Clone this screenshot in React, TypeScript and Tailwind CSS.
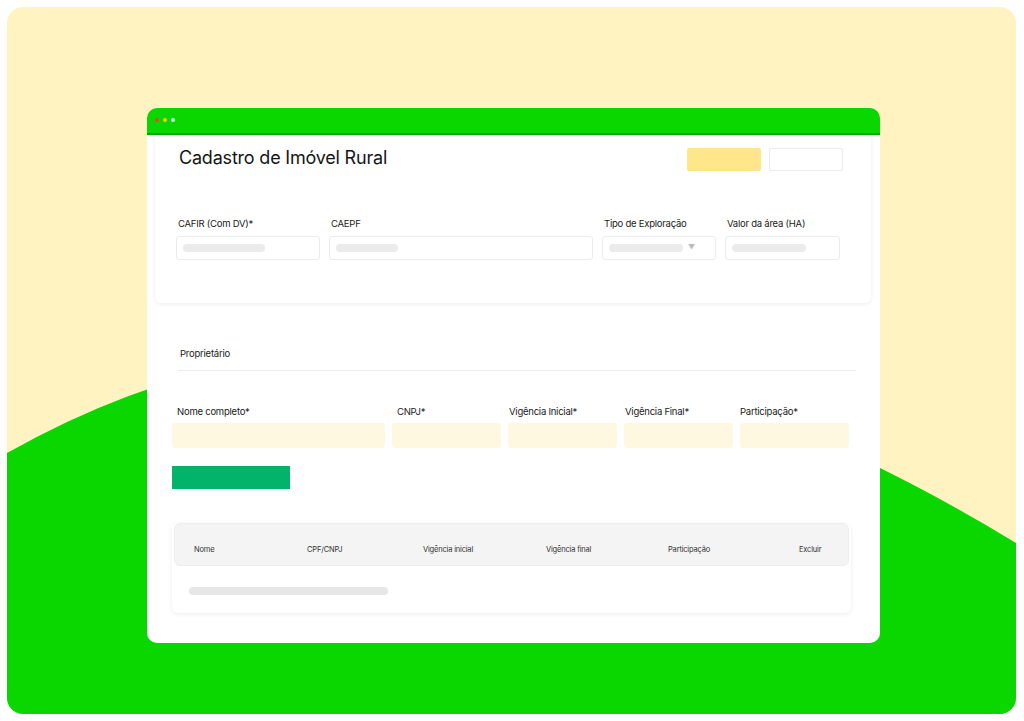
import React from "react"

const green = "bg-[#0ad600]"

const Skeleton = ({ w }: { w: string }) => (
    <div className={`${w} h-[8px] rounded-full bg-[#ebebeb]`} />
)

const TopField = ({ label, width, bar, select }: any) => (
    <div className={`flex flex-col ${width}`}>
        <p className="pl-[2px] text-[9.5px] leading-[12px] tracking-tight text-[#1a1a1a]">{label}</p>
        <div className="mt-[6px] h-[24px] rounded-[3px] border border-[#ececec] bg-white flex items-center px-[6px]">
            <Skeleton w={bar} />
            {select && <span className="ml-auto mr-[14px] text-[7px] text-[#bbb]">▼</span>}
        </div>
    </div>
)

const OwnerField = ({ label, width, shift }: any) => (
    <div className={`flex flex-col ${width}`}>
        <p className={`${shift} text-[9.5px] leading-[12px] tracking-tight text-[#1a1a1a]`}>{label}</p>
        <div className="mt-[5px] h-[25px] rounded-[3px] bg-[#fff8e1]" />
    </div>
)

const columns = [
    { label: "Nome", w: "w-[113px]" },
    { label: "CPF/CNPJ", w: "w-[116px]" },
    { label: "Vigência inicial", w: "w-[123px]" },
    { label: "Vigência final", w: "w-[122px]" },
    { label: "Participação", w: "w-[131px]" },
    { label: "Excluir", w: "flex-1" },
]

const App = () => {
    return (
        <div className="w-[1024px] h-[721px] bg-white p-[7px]" style={{ fontFamily: "Inter, 'Noto Sans', sans-serif" }}>
            <div className="relative w-[1009px] h-[707px] rounded-[16px] bg-[#fff4c1] overflow-hidden">
                <svg className="absolute inset-0" width="1009" height="707" viewBox="0 0 1009 707">
                    <path d="M0 446 Q 446 193 1009 536 L1009 707 L0 707 Z" fill="#0ad600" />
                </svg>

                <div className="relative ml-[140px] mt-[101px] w-[733px] h-[535px] rounded-[10px] bg-white overflow-hidden flex flex-col">
                    {/* window bar */}
                    <div className={`${green} h-[27px] border-b-2 border-[#04a604] flex items-center gap-[4px] pl-[8px] pb-[1px] shrink-0`}>
                        <span className="w-[4px] h-[4px] rounded-full bg-[#ff3b30]" />
                        <span className="w-[4px] h-[4px] rounded-full bg-[#ffcc00]" />
                        <span className="w-[4px] h-[4px] rounded-full bg-[#c8f7f7]" />
                    </div>

                    {/* header card */}
                    <div className="ml-[8px] mr-[9px] h-[168px] rounded-b-[6px] bg-white shadow-[0_1px_5px_rgba(0,0,0,0.08)] shrink-0">
                        <div className="flex items-start pt-[11px] pl-[24px] pr-[28px]">
                            <h1 className="text-[18px] leading-[24px] tracking-[-0.2px] text-[#151515]">Cadastro de Imóvel Rural</h1>
                            <div className="ml-auto mt-[2px] flex gap-[8px]">
                                <div className="w-[74px] h-[23px] rounded-[2px] bg-[#ffe68a]" />
                                <div className="w-[74px] h-[23px] rounded-[2px] border border-[#ececec] bg-white" />
                            </div>
                        </div>
                        <div className="flex gap-[9px] pl-[21px] mt-[47px]">
                            <TopField label="CAFIR (Com DV)*" width="w-[144px]" bar="w-[82px]" />
                            <TopField label="CAEPF" width="w-[264px]" bar="w-[62px]" />
                            <TopField label="Tipo de Exploração" width="w-[114px]" bar="w-[74px]" select />
                            <TopField label="Valor da área (HA)" width="w-[115px]" bar="w-[74px]" />
                        </div>
                    </div>

                    {/* owner section */}
                    <div className="pl-[25px] pr-[24px]">
                        <p className="mt-[45px] pl-[8px] text-[9.5px] leading-[12px] tracking-tight text-[#1a1a1a]">Proprietário</p>
                        <div className="mt-[10px] ml-[6px] border-b border-[#ececec]" />

                        <div className="flex gap-[7px] mt-[35px]">
                            <OwnerField label="Nome completo*" width="w-[213px]" shift="pl-[5px]" />
                            <OwnerField label="CNPJ*" width="w-[109px]" shift="pl-[5px]" />
                            <OwnerField label="Vigência Inicial*" width="w-[109px]" shift="pl-[1px]" />
                            <OwnerField label="Vigência Final*" width="w-[109px]" shift="pl-[1px]" />
                            <OwnerField label="Participação*" width="w-[109px]" shift="pl-0" />
                        </div>

                        <div className="mt-[18px] w-[118px] h-[23px] bg-[#02b36a]" />

                        <div className="mt-[34px] w-[679px] h-[90px] rounded-[6px] bg-white shadow-[0_1px_5px_rgba(0,0,0,0.08)] px-[2px]">
                            <div className="h-[43px] rounded-[6px] bg-[#f4f4f4] border border-[#ededed] flex items-center pl-[19px] pt-[10px]">
                                {columns.map((c) => (
                                    <span key={c.label} className={`${c.w} text-[7.5px] tracking-tight text-[#333]`}>{c.label}</span>
                                ))}
                            </div>
                            <div className="pl-[15px] mt-[21px]">
                                <div className="w-[199px] h-[8px] rounded-full bg-[#e6e6e6]" />
                            </div>
                        </div>
                    </div>
                </div>
            </div>
        </div>
    )
}

export default App
